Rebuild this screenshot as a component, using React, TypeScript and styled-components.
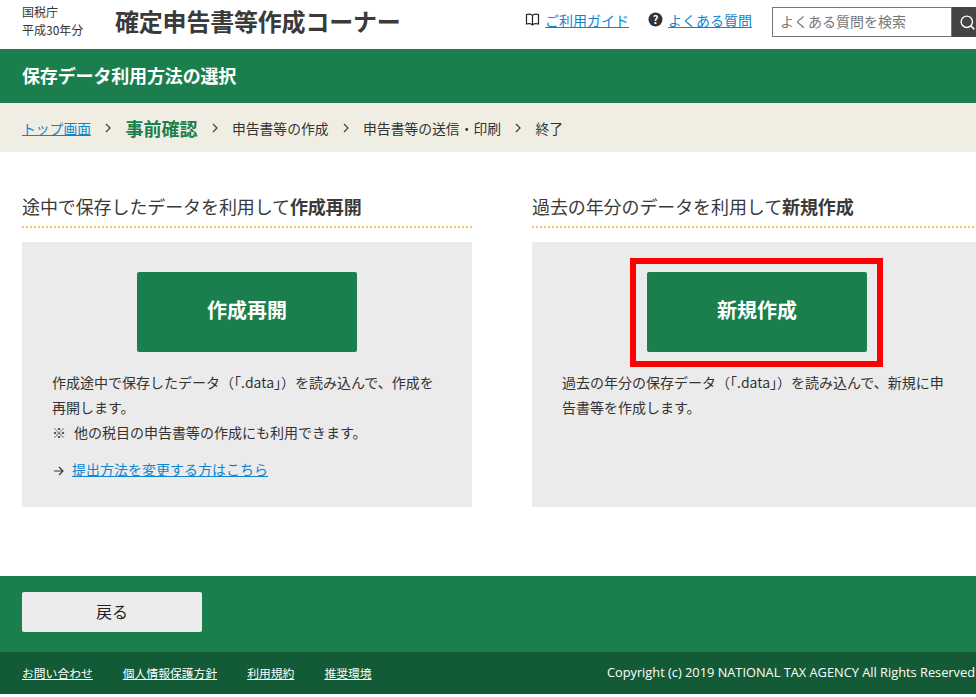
import { Fragment } from 'react';
import { createGlobalStyle, styled } from 'styled-components';
import { Search } from 'lucide-react';

const green = '#1a7f4c';
const darkGreen = '#135b36';
const linkBlue = '#0e86cf';
const textColor = '#333333';

const GlobalStyle = createGlobalStyle`
  html, body {
    margin: 0;
    padding: 0;
    background: #fff;
    overflow: hidden;
  }
  body {
    font-family: "Noto Sans CJK JP", "Noto Sans", sans-serif;
    color: ${textColor};
  }
  *, *::before, *::after {
    box-sizing: border-box;
  }
`;

const Page = styled.div`
  width: 976px;
  height: 697px;
  overflow: hidden;
`;

const Header = styled.header`
  display: flex;
  align-items: center;
  height: 49px;
  padding: 0 0 8px 22px;
`;

const Agency = styled.div`
  width: 93px;
  font-size: 12px;
  line-height: 18px;
  padding-top: 1px;
`;

const SiteTitle = styled.h1`
  margin: 0;
  width: 410px;
  font-size: 24px;
  font-weight: 700;
  letter-spacing: -0.2px;
  color: #3a3a3a;
`;

const HeaderLink = styled.div<{ $width: number }>`
  display: flex;
  align-items: center;
  gap: 5px;
  width: ${(p) => p.$width}px;
  margin-bottom: 2px;
  font-size: 14px;
`;

const TextLink = styled.a`
  color: ${linkBlue};
  text-decoration: underline;
`;

const SearchBox = styled.div`
  display: flex;
  height: 30px;
  width: 204px;
  flex-shrink: 0;
  margin-top: 3px;
`;

const SearchField = styled.div`
  flex: none;
  width: 180px;
  border: 1px solid #777;
  padding-left: 7px;
  font-size: 14px;
  line-height: 26px;
  color: #777;
`;

const SearchButton = styled.div`
  flex: 1;
  display: flex;
  align-items: center;
  padding-left: 7px;
  background: #444;
  color: #fff;
`;

const TitleBar = styled.div`
  display: flex;
  align-items: center;
  height: 54px;
  padding: 0 0 3px 22px;
  background: ${green};
  color: #fff;
  font-size: 18px;
  font-weight: 700;
  letter-spacing: -0.15px;
`;

const Breadcrumb = styled.nav`
  display: flex;
  align-items: center;
  height: 49px;
  padding-left: 22px;
  background: #f0eee3;
  font-size: 13.8px;
`;

const CurrentStep = styled.span`
  color: ${green};
  font-size: 18px;
  font-weight: 700;
`;

const Chevron = styled.svg`
  width: 8px;
  height: 10px;
  margin: 0 13.25px;
  flex-shrink: 0;
`;

const Columns = styled.main`
  display: flex;
  gap: 60px;
  padding: 40px 0 0 22px;
  height: 424px;
  width: 1020px;
`;

const Column = styled.section`
  width: 450px;
`;

const ColumnHeading = styled.h2`
  margin: 0;
  height: 36px;
  border-bottom: 2px dotted #f2c36b;
  font-size: 18px;
  font-weight: 400;
  line-height: 29px;
  letter-spacing: -0.1px;
  color: #3a3a3a;

  strong {
    font-weight: 700;
  }
`;

const Panel = styled.div`
  margin-top: 14px;
  height: 265px;
  padding: 30px 30px 0;
  background: #ebebeb;
`;

const PrimaryButton = styled.div<{ $highlighted?: boolean }>`
  position: relative;
  display: flex;
  align-items: center;
  justify-content: center;
  width: 220px;
  height: 80px;
  margin: 0 auto 18px;
  padding-bottom: 6px;
  background: ${green};
  border-radius: 2px;
  color: #fff;
  font-size: 20px;
  font-weight: 700;
  ${(p) =>
    p.$highlighted &&
    `&::after {
      content: '';
      position: absolute;
      left: -17px;
      top: -14px;
      width: 253px;
      height: 109px;
      border: 6px solid #f00;
    }`}
`;

const Description = styled.p`
  margin: 0;
  font-size: 14px;
  line-height: 25px;
  color: ${textColor};
`;

const NoteMark = styled.span`
  margin-right: 8px;
`;

const ArrowLink = styled.div`
  display: flex;
  align-items: center;
  gap: 8px;
  margin-top: 14px;
  font-size: 14px;
`;

const ArrowIcon = styled.svg`
  margin: 4px 0 0 1px;
`;

const BackBar = styled.div`
  display: flex;
  align-items: center;
  height: 76px;
  padding: 0 0 4px 22px;
  background: ${green};
`;

const BackButton = styled.div`
  display: flex;
  align-items: center;
  justify-content: center;
  width: 180px;
  height: 40px;
  padding-bottom: 2px;
  background: #ececec;
  border-radius: 2px;
  font-size: 16px;
  color: #222;
`;

const Footer = styled.footer`
  display: flex;
  align-items: center;
  height: 42px;
  padding: 0 1px 2px 22px;
  background: ${darkGreen};
  color: #fff;
  font-size: 11.8px;
`;

const FooterLink = styled.a`
  color: #fff;
  text-decoration: underline;
  margin-right: 30px;
`;

const Copyright = styled.span`
  margin-left: auto;
  white-space: nowrap;
  font-family: "Open Sans", sans-serif;
  font-size: 12.8px;
`;

const steps = ['申告書等の作成', '申告書等の送信・印刷', '終了'];
const footerLinks = ['お問い合わせ', '個人情報保護方針', '利用規約', '推奨環境'];

function StepChevron() {
  return (
    <Chevron viewBox="0 0 8 10">
      <path d="M2 1l4 4-4 4" fill="none" stroke="#444" strokeWidth="1.3" />
    </Chevron>
  );
}

function App() {
  return (
    <Page>
      <GlobalStyle />
      <Header>
        <Agency>
          国税庁
          <br />
          平成30年分
        </Agency>
        <SiteTitle>確定申告書等作成コーナー</SiteTitle>
        <HeaderLink $width={123}>
          <svg width="15" height="13" viewBox="0 0 15 13">
            <path
              d="M7.5 2.500C6.500 1 4 1 1.500 1.500V11C4 10.500 6.500 10.500 7.500 12 8.500 10.500 11 10.500 13.500 11V1.500C11 1 8.500 1 7.500 2.500V12"
              fill="none"
              stroke="#222"
              strokeWidth="1.200"
            />
          </svg>
          <TextLink>ご利用ガイド</TextLink>
        </HeaderLink>
        <HeaderLink $width={124}>
          <svg width="15" height="15" viewBox="0 0 15 15">
            <circle cx="7.500" cy="7.500" r="7" fill="#333" />
            <text x="7.500" y="11.500" textAnchor="middle" fontSize="11" fontWeight="700" fill="#fff">
              ?
            </text>
          </svg>
          <TextLink>よくある質問</TextLink>
        </HeaderLink>
        <SearchBox>
          <SearchField>よくある質問を検索</SearchField>
          <SearchButton>
            <Search size={17} strokeWidth={2} />
          </SearchButton>
        </SearchBox>
      </Header>

      <TitleBar>保存データ利用方法の選択</TitleBar>

      <Breadcrumb>
        <TextLink>トップ画面</TextLink>
        <StepChevron />
        <CurrentStep>事前確認</CurrentStep>
        {steps.map((step) => (
          <Fragment key={step}>
            <StepChevron />
            <span>{step}</span>
          </Fragment>
        ))}
      </Breadcrumb>

      <Columns>
        <Column>
          <ColumnHeading>
            途中で保存したデータを利用して<strong>作成再開</strong>
          </ColumnHeading>
          <Panel>
            <PrimaryButton>作成再開</PrimaryButton>
            <Description>
              作成途中で保存したデータ（「.data」）を読み込んで、作成を
              <br />
              再開します。
              <br />
              <NoteMark>※</NoteMark>他の税目の申告書等の作成にも利用できます。
            </Description>
            <ArrowLink>
              <ArrowIcon width="11" height="10" viewBox="0 0 11 10">
                <path d="M1 5h9M6 1l4 4-4 4" fill="none" stroke="#333" strokeWidth="1.100" />
              </ArrowIcon>
              <TextLink>提出方法を変更する方はこちら</TextLink>
            </ArrowLink>
          </Panel>
        </Column>
        <Column>
          <ColumnHeading>
            過去の年分のデータを利用して<strong>新規作成</strong>
          </ColumnHeading>
          <Panel>
            <PrimaryButton $highlighted>新規作成</PrimaryButton>
            <Description>
              過去の年分の保存データ（「.data」）を読み込んで、新規に申
              <br />
              告書等を作成します。
            </Description>
          </Panel>
        </Column>
      </Columns>

      <BackBar>
        <BackButton>戻る</BackButton>
      </BackBar>
      <Footer>
        {footerLinks.map((label) => (
          <FooterLink key={label}>{label}</FooterLink>
        ))}
        <Copyright>Copyright (c) 2019 NATIONAL TAX AGENCY All Rights Reserved</Copyright>
      </Footer>
    </Page>
  );
}

export default App;
